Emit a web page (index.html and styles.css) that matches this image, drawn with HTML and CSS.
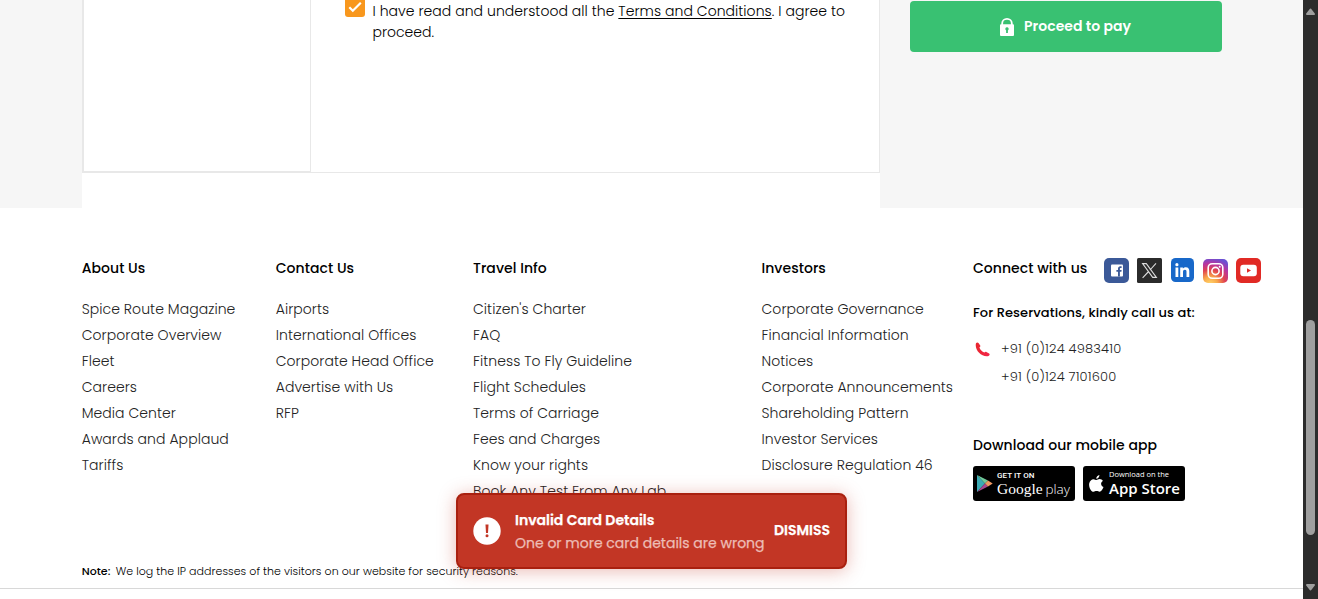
FILE: index.html
```html
<!DOCTYPE html>
<html lang="en">
<head>
<meta charset="utf-8">
<title>Payment</title>
<link rel="stylesheet" href="styles.css">
</head>
<body>
<div class="window">
  <div class="page">
    <main class="checkout">
      <section class="payment">
        <div class="payment-box">
          <div class="payment-tabs"></div>
          <div class="payment-body">
            <span class="checkbox">
              <svg width="20" height="20" viewBox="0 0 20 20"><path d="M4.300 10.300l3.500 3.500 8-8.100" fill="none" stroke="#fff" stroke-width="2.200"/></svg>
            </span>
            <p class="terms"><span class="terms-line">I have read and understood all the <a href="#">Terms and Conditions</a>. I agree to</span><br>proceed.</p>
          </div>
        </div>
      </section>
      <aside class="summary">
        <button class="pay">
          <svg width="14" height="18" viewBox="0 0 14 18"><path d="M2.200 7V5.300a4.800 4.400 0 0 1 9.600 0V7" fill="none" stroke="#fff" stroke-width="1.800"/><rect y="6.200" width="14" height="11.800" rx="1" fill="#fff"/><path d="M7 9.300a1.800 1.800 0 0 1 .9 3.300V15H6.100v-2.400A1.800 1.800 0 0 1 7 9.300z" fill="#39c172"/></svg>
          <span>Proceed to pay</span>
        </button>
      </aside>
    </main>
    <footer class="footer">
      <div class="columns">
        <nav class="col">
          <h3>About Us</h3>
          <ul><li>Spice Route Magazine</li><li>Corporate Overview</li><li>Fleet</li><li>Careers</li><li>Media Center</li><li>Awards and Applaud</li><li>Tariffs</li></ul>
        </nav>
        <nav class="col">
          <h3>Contact Us</h3>
          <ul><li>Airports</li><li>International Offices</li><li>Corporate Head Office</li><li>Advertise with Us</li><li>RFP</li></ul>
        </nav>
        <nav class="col">
          <h3>Travel Info</h3>
          <ul><li>Citizen's Charter</li><li>FAQ</li><li>Fitness To Fly Guideline</li><li>Flight Schedules</li><li>Terms of Carriage</li><li>Fees and Charges</li><li>Know your rights</li><li>Book Any Test From Any Lab</li></ul>
        </nav>
        <nav class="col">
          <h3>Investors</h3>
          <ul><li>Corporate Governance</li><li>Financial Information</li><li>Notices</li><li>Corporate Announcements</li><li>Shareholding Pattern</li><li>Investor Services</li><li>Disclosure Regulation 46</li></ul>
        </nav>
        <div class="col connect">
          <div class="social">
            <h3>Connect with us</h3>
            <svg class="facebook" width="25" height="25" viewBox="0 0 25 25"><rect width="25" height="25" rx="5" fill="#3b5998"/><rect x="7" y="6.500" width="12" height="12" rx="1" fill="#fff"/><path d="M14 18.500v-4.800h-1.600v-1.800H14v-1.100c0-1.700.9-2.600 2.400-2.600h1.200v1.700h-.8c-.8 0-.9.4-.9 1v1h1.700l-.2 1.800h-1.500v4.800z" fill="#3b5998"/></svg>
            <svg class="x" width="25" height="25" viewBox="0 0 25 25"><rect width="25" height="25" rx="1.500" fill="#2b2b2b"/><path d="M5.600 5.600h3.700l10.100 13.800h-3.700zM19 5.400l-6 6.600M11.600 13.500l-6 6.300" fill="none" stroke="#ddd" stroke-width="1.100"/></svg>
            <svg class="linkedin" width="23" height="24" viewBox="0 0 23 24"><rect width="23" height="24" rx="4.500" fill="#1868c9"/><path d="M4.500 9.500h2.800v9.500H4.500zM9.200 9.500h2.700v1.300c.5-1 1.600-1.500 2.800-1.500 2.900 0 3.600 1.600 3.600 4.200v5.500h-2.800v-5.200c0-1.300-.3-2.100-1.600-2.100s-1.900.9-1.900 2.200v5.100H9.200z" fill="#fff"/><circle cx="5.900" cy="6.700" r="1.600" fill="#fff"/></svg>
            <svg class="instagram" width="25" height="24" viewBox="0 0 25 24"><defs><radialGradient id="ig" cx=".28" cy="1.050" r="1.100"><stop offset="0" stop-color="#ffd66b"/><stop offset=".28" stop-color="#f9a84b"/><stop offset=".55" stop-color="#e0434f"/><stop offset=".78" stop-color="#b835a0"/><stop offset="1" stop-color="#6b50d2"/></radialGradient></defs><rect width="25" height="24" rx="5" fill="url(#ig)"/><g fill="none" stroke="#fff" stroke-width="1.600"><rect x="5.200" y="4.700" width="14.600" height="14.600" rx="4"/><circle cx="12.500" cy="12" r="3.600"/></g><circle cx="16.700" cy="7.800" r="1" fill="#fff"/></svg>
            <svg class="youtube" width="25" height="25" viewBox="0 0 25 25"><rect width="25" height="25" rx="5" fill="#e12a25"/><rect x="4.300" y="6.700" width="16.500" height="11.600" rx="3" fill="#fff"/><path d="M11 10.200v4.600l4-2.300z" fill="#e12a25"/></svg>
          </div>
          <h4>For Reservations, kindly call us at:</h4>
          <div class="phones">
            <svg width="15" height="15" viewBox="0 0 15 15"><defs><linearGradient id="ph" x1="0" x2="1"><stop offset="0" stop-color="#e8262d"/><stop offset="1" stop-color="#f4264c"/></linearGradient></defs><path d="M1 1.200c.8-1 1.900-1 2.700 0l1.500 2.200c.4.8.1 1.300-.8 2 .9 2.300 2.600 4.100 5 5.100.8-.9 1.300-1.100 2-.6l2.700 1.700c1 .8.600 1.600-.6 2.500C6.500 15.500-.8 8 1 1.200z" fill="url(#ph)"/></svg>
            <div><p>+91 (0)124 4983410</p><p>+91 (0)124 7101600</p></div>
          </div>
          <h3 class="download">Download our mobile app</h3>
          <div class="stores">
            <div class="store google">
              <svg width="16" height="19" viewBox="0 0 16 19"><path d="M0 1v17l8-8.500z" fill="#3caab4"/><path d="M0 1l8 8.500 3-3z" fill="#70c99a"/><path d="M0 18l8-8.500 3 3z" fill="#a8488f"/><path d="M8 9.500l3-3 4.700 3-4.700 3z" fill="#ee9863"/></svg>
              <div><small>GET IT ON</small><b>Google <i>play</i></b></div>
            </div>
            <div class="store apple">
              <svg width="15" height="18" viewBox="0 0 15 18"><path d="M10.400 0c.1 2-1.500 3.700-3.100 3.700C7.100 2 8.700.2 10.400 0zM7.500 5c.8 0 1.600-.9 3.200-.9 1.300 0 2.500.7 3.200 1.800-2.700 1.600-2.200 5.100.6 6.200-.9 2.400-2.300 4.700-3.900 4.700-1.200 0-1.500-.7-3-.7s-1.900.7-3 .7C1.900 16.800-.4 12 .2 8.500c.5-2.700 2.400-4.300 4.300-4.300 1.300 0 2.200.8 3 .8z" fill="#fff"/></svg>
              <div><small>Download on the</small><b>App Store</b></div>
            </div>
          </div>
        </div>
      </div>
      <p class="note"><b>Note:</b><span>We log the IP addresses of the visitors on our website for security reasons.</span></p>
    </footer>
  </div>
  <div class="scrollbar">
    <svg width="15" height="9" viewBox="0 0 15 9"><path d="M7.500 2.500L11 7H4z" fill="#9f9f9f" stroke="#9f9f9f" stroke-width="2" stroke-linejoin="round"/></svg>
    <div class="thumb"></div>
    <svg width="15" height="9" viewBox="0 0 15 9"><path d="M7.500 7.500L4 3h7z" fill="#9f9f9f" stroke="#9f9f9f" stroke-width="2" stroke-linejoin="round"/></svg>
  </div>
</div>
<div class="toast">
  <svg width="28" height="28" viewBox="0 0 28 28"><circle cx="14" cy="14" r="13.700" fill="#fff"/><path d="M12.500 7.500h3l-.5 8.500h-2z" fill="#c23625"/><circle cx="14" cy="18.700" r="1.500" fill="#c23625"/></svg>
  <div class="toast-text"><strong>Invalid Card Details</strong><p>One or more card details are wrong</p></div>
  <button class="dismiss">DISMISS</button>
</div>
</body>
</html>
```

FILE: styles.css
```css
* { box-sizing: border-box; margin: 0; padding: 0; }
body {
  font-family: Poppins, "Open Sans", sans-serif;
  font-size: 14px;
  color: #222;
  background: #fff;
  overflow: hidden;
}
svg { display: block; flex: none; }
button { font: inherit; border: 0; background: none; color: #fff; white-space: nowrap; }
.window { display: flex; height: 599px; }
.page { flex: 1; min-width: 0; overflow: hidden; }

.checkout { display: flex; height: 208px; padding-left: 82px; background: #f6f6f6; }
.payment { width: 798px; background: #fff; }
.payment-box { display: flex; height: 173px; border: 1px solid #e8e8e8; border-top: 0; }
.payment-tabs { width: 228px; border: 1px solid #e8e8e8; border-top: 0; }
.payment-body { display: flex; gap: 7.500px; padding-left: 34px; white-space: nowrap; }
.checkbox { width: 20px; height: 17px; background: #f8971d; border-radius: 0 0 3px 3px; display: flex; align-items: flex-end; }
.terms { padding-top: 1px; line-height: 21px; font-weight: 300; color: #000; }
.terms-line { letter-spacing: .05px; }
.terms a { color: inherit; text-underline-offset: 2px; }
.summary { padding: 1px 0 0 30px; }
.pay { display: flex; align-items: center; justify-content: center; gap: 10px; width: 312px; height: 51px; padding-right: 1px; border-radius: 4px; background: #39c172; font-weight: 600; }

.footer { height: 381px; padding: 47px 0 0 81.700px; border-bottom: 1px solid #d8d8d8; }
.columns { display: grid; grid-template-columns: 194px 197.300px 288.500px 211.500px 1fr; height: 307px; }
.col { white-space: nowrap; }
h3 { font-size: 14px; font-weight: 500; line-height: 26px; letter-spacing: .05px; color: #000; }
ul { list-style: none; margin-top: 15px; }
li { height: 26px; line-height: 26px; font-weight: 300; letter-spacing: .06px; }
.social { display: flex; align-items: flex-start; }
.social h3 { width: 131px; }
.facebook, .x, .youtube { margin-top: 3px; }
.x { margin-left: 8px; }
.linkedin { margin: 3px 0 0 9px; }
.instagram { margin: 4px 0 0 9px; }
.youtube { margin-left: 8px; }
h4 { margin-top: 20px; font-size: 13px; font-weight: 500; line-height: 20px; letter-spacing: .08px; color: #000; }
.phones { display: flex; gap: 11px; margin-top: 12px; padding-left: 2px; }
.phones svg { margin-top: 7px; }
.phones p { font-size: 13px; line-height: 28px; font-weight: 300; letter-spacing: .17px; }
.download { margin-top: 41px; }
.stores { display: flex; gap: 8px; margin-top: 8px; }
.store { display: flex; align-items: center; width: 102px; height: 35px; border-radius: 3px; background: #000; color: #fff; font-family: "Open Sans", sans-serif; }
.store small, .store b { display: block; }
.store.google { padding-left: 4px; gap: 4px; }
.google small { font: 500 8px/8px Roboto, sans-serif; letter-spacing: .1px; margin-top: 2px; }
.google b { font: 400 15.500px/18px "Liberation Serif", serif; }
.google i { font: 300 13.500px/18px "Open Sans", sans-serif; margin-left: -1px; }
.store.apple { padding-left: 6px; gap: 5px; }
.apple small { font-size: 7.500px; line-height: 9px; }
.apple b { font-size: 15px; line-height: 18px; font-weight: 600; }
.note { font-size: 11px; line-height: 18px; font-weight: 300; letter-spacing: .04px; color: #000; white-space: nowrap; }
.note b { display: inline-block; width: 34px; font-weight: 500; }

.scrollbar { width: 15px; background: #2c2c2c; display: flex; flex-direction: column; padding: 7px 0; }
.thumb { width: 9px; height: 215px; margin: 304px 0 47px 3px; border-radius: 5px; background: #9f9f9f; }

.toast { position: absolute; left: 456px; top: 493px; width: 391px; height: 76px; display: flex; align-items: center; padding: 0 15px; border: 2px solid #a9200f; border-radius: 8px; background: #c23625; box-shadow: 0 2px 18px rgba(194, 54, 37, .35); color: #fff; white-space: nowrap; }
.toast > svg { margin-top: -1px; }
.toast-text { width: 259px; margin-left: 14px; padding-top: 2px; line-height: 23px; -webkit-text-stroke: .25px currentColor; }
.toast-text strong { display: block; font-weight: 600; }
.toast-text p { color: #edbdb5; }
.dismiss { padding-bottom: 2px; font-weight: 600; -webkit-text-stroke: .25px currentColor; }
```
